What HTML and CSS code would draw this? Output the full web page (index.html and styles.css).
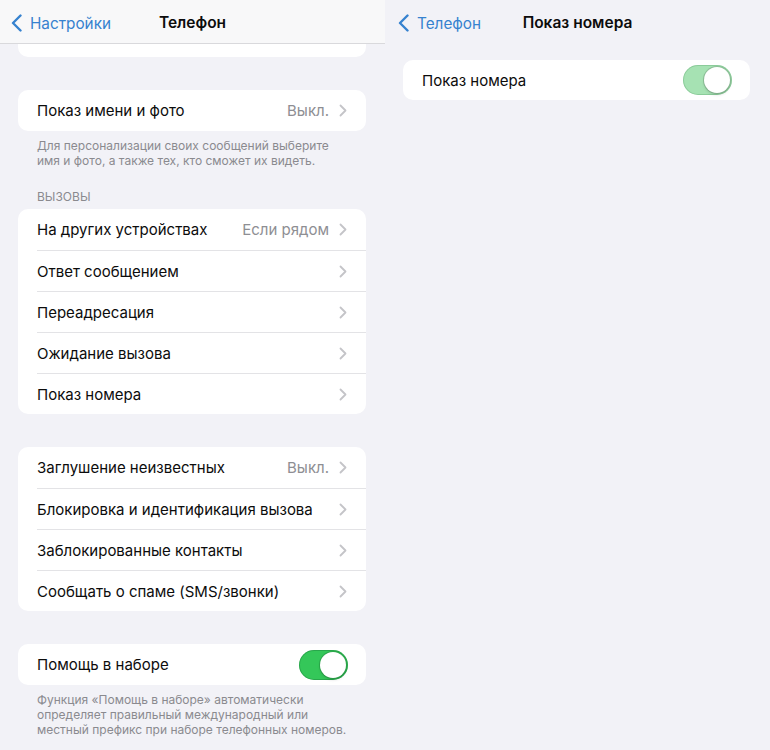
FILE: index.html
```html
<!DOCTYPE html>
<html lang="ru">
<head>
<meta charset="utf-8">
<link rel="stylesheet" href="styles.css">
</head>
<body>
<div class="screen">
  <section class="panel">
    <header class="nav nav-bar">
      <a class="back"><svg class="back-ico" width="11" height="18" viewBox="0 0 11 18"><path d="M9.5 1.5L2 9l7.5 7.5" fill="none" stroke="currentColor" stroke-width="2.4" stroke-linecap="round" stroke-linejoin="round"/></svg><span>Настройки</span></a>
      <h1 class="title">Телефон</h1>
    </header>
    <div class="content">
      <div class="card card-clipped"></div>

      <div class="card card-gap-top">
        <div class="row"><span class="label">Показ имени и фото</span><span class="value">Выкл.</span><svg class="chev" width="8" height="13" viewBox="0 0 8 13"><path d="M1.5 1.5l5 5-5 5" fill="none" stroke="currentColor" stroke-width="1.8" stroke-linecap="round" stroke-linejoin="round"/></svg></div>
      </div>
      <p class="foot">Для персонализации своих сообщений выберите имя и фото, а также тех, кто сможет их видеть.</p>

      <p class="section-head">ВЫЗОВЫ</p>
      <div class="card">
        <div class="row"><span class="label">На других устройствах</span><span class="value">Если рядом</span><svg class="chev" width="8" height="13" viewBox="0 0 8 13"><path d="M1.5 1.5l5 5-5 5" fill="none" stroke="currentColor" stroke-width="1.8" stroke-linecap="round" stroke-linejoin="round"/></svg></div>
        <div class="row"><span class="label">Ответ сообщением</span><svg class="chev" width="8" height="13" viewBox="0 0 8 13"><path d="M1.5 1.5l5 5-5 5" fill="none" stroke="currentColor" stroke-width="1.8" stroke-linecap="round" stroke-linejoin="round"/></svg></div>
        <div class="row"><span class="label">Переадресация</span><svg class="chev" width="8" height="13" viewBox="0 0 8 13"><path d="M1.5 1.5l5 5-5 5" fill="none" stroke="currentColor" stroke-width="1.8" stroke-linecap="round" stroke-linejoin="round"/></svg></div>
        <div class="row"><span class="label">Ожидание вызова</span><svg class="chev" width="8" height="13" viewBox="0 0 8 13"><path d="M1.5 1.5l5 5-5 5" fill="none" stroke="currentColor" stroke-width="1.8" stroke-linecap="round" stroke-linejoin="round"/></svg></div>
        <div class="row"><span class="label">Показ номера</span><svg class="chev" width="8" height="13" viewBox="0 0 8 13"><path d="M1.5 1.5l5 5-5 5" fill="none" stroke="currentColor" stroke-width="1.8" stroke-linecap="round" stroke-linejoin="round"/></svg></div>
      </div>

      <div class="card card-gap-top">
        <div class="row"><span class="label">Заглушение неизвестных</span><span class="value">Выкл.</span><svg class="chev" width="8" height="13" viewBox="0 0 8 13"><path d="M1.5 1.5l5 5-5 5" fill="none" stroke="currentColor" stroke-width="1.8" stroke-linecap="round" stroke-linejoin="round"/></svg></div>
        <div class="row"><span class="label">Блокировка и идентификация вызова</span><svg class="chev" width="8" height="13" viewBox="0 0 8 13"><path d="M1.5 1.5l5 5-5 5" fill="none" stroke="currentColor" stroke-width="1.8" stroke-linecap="round" stroke-linejoin="round"/></svg></div>
        <div class="row"><span class="label">Заблокированные контакты</span><svg class="chev" width="8" height="13" viewBox="0 0 8 13"><path d="M1.5 1.5l5 5-5 5" fill="none" stroke="currentColor" stroke-width="1.8" stroke-linecap="round" stroke-linejoin="round"/></svg></div>
        <div class="row"><span class="label">Сообщать о спаме (SMS/звонки)</span><svg class="chev" width="8" height="13" viewBox="0 0 8 13"><path d="M1.5 1.5l5 5-5 5" fill="none" stroke="currentColor" stroke-width="1.8" stroke-linecap="round" stroke-linejoin="round"/></svg></div>
      </div>

      <div class="card card-gap-top">
        <div class="row row-toggle"><span class="label">Помощь в наборе</span><span class="toggle"><span class="knob"></span></span></div>
      </div>
      <p class="foot">Функция «Помощь в наборе» автоматически определяет правильный международный или местный префикс при наборе телефонных номеров.</p>
    </div>
  </section>

  <section class="panel">
    <header class="nav">
      <a class="back back-right"><svg class="back-ico" width="11" height="18" viewBox="0 0 11 18"><path d="M9.5 1.5L2 9l7.5 7.5" fill="none" stroke="currentColor" stroke-width="2.4" stroke-linecap="round" stroke-linejoin="round"/></svg><span>Телефон</span></a>
      <h1 class="title">Показ номера</h1>
    </header>
    <div class="content content-right">
      <div class="card">
        <div class="row row-toggle row-short"><span class="label">Показ номера</span><span class="toggle toggle-dim"><span class="knob"></span></span></div>
      </div>
    </div>
  </section>
</div>
</body>
</html>
```

FILE: styles.css
```css
* { box-sizing: border-box; }
html, body { margin: 0; padding: 0; }
body {
  background: #f2f2f7;
  font-family: Inter, "Noto Sans", "Liberation Sans", sans-serif;
  color: #0c0c0c;
  -webkit-font-smoothing: antialiased;
}
.screen {
  display: flex;
  width: 770px;
  height: 750px;
  overflow: hidden;
}
.panel {
  width: 385px;
  flex: 0 0 385px;
  display: flex;
  flex-direction: column;
  height: 750px;
  overflow: hidden;
  background: #f2f2f7;
}
.nav {
  position: relative;
  height: 44px;
  flex: 0 0 44px;
  display: flex;
  align-items: center;
  justify-content: center;
  padding-top: 1px;
}
.nav-bar {
  background: #f8f8f9;
  border-bottom: 1px solid #d9d9dc;
}
.back {
  position: absolute;
  left: 11px;
  top: 1px;
  height: 44px;
  display: flex;
  align-items: center;
  gap: 8px;
  color: #3682cf;
  font-size: 15.3px;
}
.back-right { left: 13px; }
.back-ico { display: block; margin-top: -1px; }
.title {
  margin: 0;
  font-size: 15.5px;
  font-weight: 600;
}
.content {
  padding: 0 19px 0 18px;
  display: flex;
  flex-direction: column;
}
.content-right {
  padding: 16px 20px 0 18px;
}
.card {
  background: #fff;
  border-radius: 10px;
  overflow: hidden;
}
.card-clipped {
  height: 13px;
  border-radius: 0 0 10px 10px;
}
.card-gap-top { margin-top: 33px; }
.row {
  height: 41px;
  display: flex;
  align-items: center;
  padding: 0 19px 0 0;
  margin-left: 19px;
  font-size: 15px;
  border-top: 1px solid #e3e3e6;
}
.row:first-child { border-top: none; }
.row-short { height: 40px; }
.label { flex: 1; white-space: nowrap; }
.value {
  color: #8e8e93;
  margin-right: 10px;
}
.chev {
  color: #c4c4c8;
  display: block;
}
.foot {
  margin: 7px 0 0;
  padding: 0 19px;
  font-size: 12px;
  line-height: 15px;
  color: #8a8a8f;
}
.section-head {
  margin: 21px 0 5px;
  padding: 0 19px;
  font-size: 12px;
  line-height: 15px;
  color: #8a8a8f;
}
.row-toggle { padding-right: 18px; }
.toggle {
  width: 49px;
  height: 30px;
  border-radius: 15px;
  background: #34c759;
  box-shadow: inset 0 0 0 1px rgba(20, 110, 50, 0.35);
  position: relative;
  flex: 0 0 auto;
}
.toggle-dim {
  background: #a6e2b3;
  box-shadow: inset 0 0 0 1px rgba(60, 140, 80, 0.25);
}
.knob {
  position: absolute;
  right: 2px;
  top: 2px;
  width: 26px;
  height: 26px;
  border-radius: 50%;
  background: #fff;
  box-shadow: 0 0 0 1px rgba(0, 0, 0, 0.15), 0 2px 3px rgba(0, 0, 0, 0.12);
}
```
